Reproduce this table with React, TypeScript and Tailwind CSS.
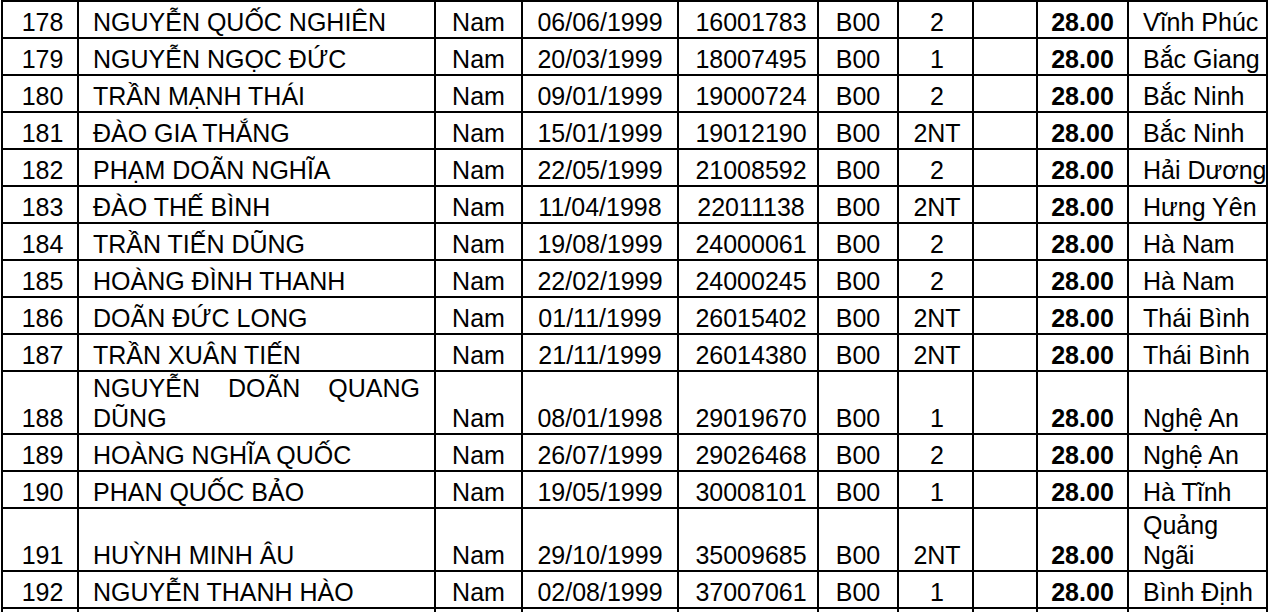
type Row = [string, string, string, string, string, string, string, string, string[]]

const ROWS: Row[] = [
  ['178', 'NGUYỄN QUỐC NGHIÊN', 'Nam', '06/06/1999', '16001783', 'B00', '2', '28.00', ['Vĩnh Phúc']],
  ['179', 'NGUYỄN NGỌC ĐỨC', 'Nam', '20/03/1999', '18007495', 'B00', '1', '28.00', ['Bắc Giang']],
  ['180', 'TRẦN MẠNH THÁI', 'Nam', '09/01/1999', '19000724', 'B00', '2', '28.00', ['Bắc Ninh']],
  ['181', 'ĐÀO GIA THẮNG', 'Nam', '15/01/1999', '19012190', 'B00', '2NT', '28.00', ['Bắc Ninh']],
  ['182', 'PHẠM DOÃN NGHĨA', 'Nam', '22/05/1999', '21008592', 'B00', '2', '28.00', ['Hải Dương']],
  ['183', 'ĐÀO THẾ BÌNH', 'Nam', '11/04/1998', '22011138', 'B00', '2NT', '28.00', ['Hưng Yên']],
  ['184', 'TRẦN TIẾN DŨNG', 'Nam', '19/08/1999', '24000061', 'B00', '2', '28.00', ['Hà Nam']],
  ['185', 'HOÀNG ĐÌNH THANH', 'Nam', '22/02/1999', '24000245', 'B00', '2', '28.00', ['Hà Nam']],
  ['186', 'DOÃN ĐỨC LONG', 'Nam', '01/11/1999', '26015402', 'B00', '2NT', '28.00', ['Thái Bình']],
  ['187', 'TRẦN XUÂN TIẾN', 'Nam', '21/11/1999', '26014380', 'B00', '2NT', '28.00', ['Thái Bình']],
  ['188', 'NGUYỄN DOÃN QUANG DŨNG', 'Nam', '08/01/1998', '29019670', 'B00', '1', '28.00', ['Nghệ An']],
  ['189', 'HOÀNG NGHĨA QUỐC', 'Nam', '26/07/1999', '29026468', 'B00', '2', '28.00', ['Nghệ An']],
  ['190', 'PHAN QUỐC BẢO', 'Nam', '19/05/1999', '30008101', 'B00', '1', '28.00', ['Hà Tĩnh']],
  ['191', 'HUỲNH MINH ÂU', 'Nam', '29/10/1999', '35009685', 'B00', '2NT', '28.00', ['Quảng', 'Ngãi']],
  ['192', 'NGUYỄN THANH HÀO', 'Nam', '02/08/1999', '37007061', 'B00', '1', '28.00', ['Bình Định']],
]

const td = 'border-2 border-black align-bottom p-0 pt-px h-[37px]'

export default function App() {
  return (
    <div className="bg-white w-[1272px] h-[612px] overflow-hidden font-['Liberation_Sans',Arial,sans-serif] text-[25px] leading-[30px] text-black">
      <table className="ml-px table-fixed border-collapse w-[1267px]">
        <colgroup>
          <col className="w-[76px]" />
          <col className="w-[357px]" />
          <col className="w-[87px]" />
          <col className="w-[156px]" />
          <col className="w-[140px]" />
          <col className="w-[80px]" />
          <col className="w-[75px]" />
          <col className="w-[64px]" />
          <col className="w-[91px]" />
          <col className="w-[139px]" />
        </colgroup>
        <tbody>
          {ROWS.map(([no, name, sex, dob, id, block, area, score, prov]) => (
            <tr key={no}>
              <td className={`${td} text-center pl-[5px]`}>{no}</td>
              <td className={`${td} text-justify px-[14px]`}>{name}</td>
              <td className={`${td} text-center`}>{sex}</td>
              <td className={`${td} text-center`}>{dob}</td>
              <td className={`${td} text-center pl-[6px]`}>{id}</td>
              <td className={`${td} text-center`}>{block}</td>
              <td className={`${td} text-center pl-[3px]`}>{area}</td>
              <td className={td}></td>
              <td className={`${td} text-center font-bold`}>{score}</td>
              <td className={`${td} text-left pl-[14px] pr-0 whitespace-nowrap`}>
                {prov.map((p) => (
                  <div key={p}>{p}</div>
                ))}
              </td>
            </tr>
          ))}
          <tr>
            {Array.from({ length: 10 }, (_, i) => (
              <td key={i} className={td}></td>
            ))}
          </tr>
        </tbody>
      </table>
    </div>
  )
}
